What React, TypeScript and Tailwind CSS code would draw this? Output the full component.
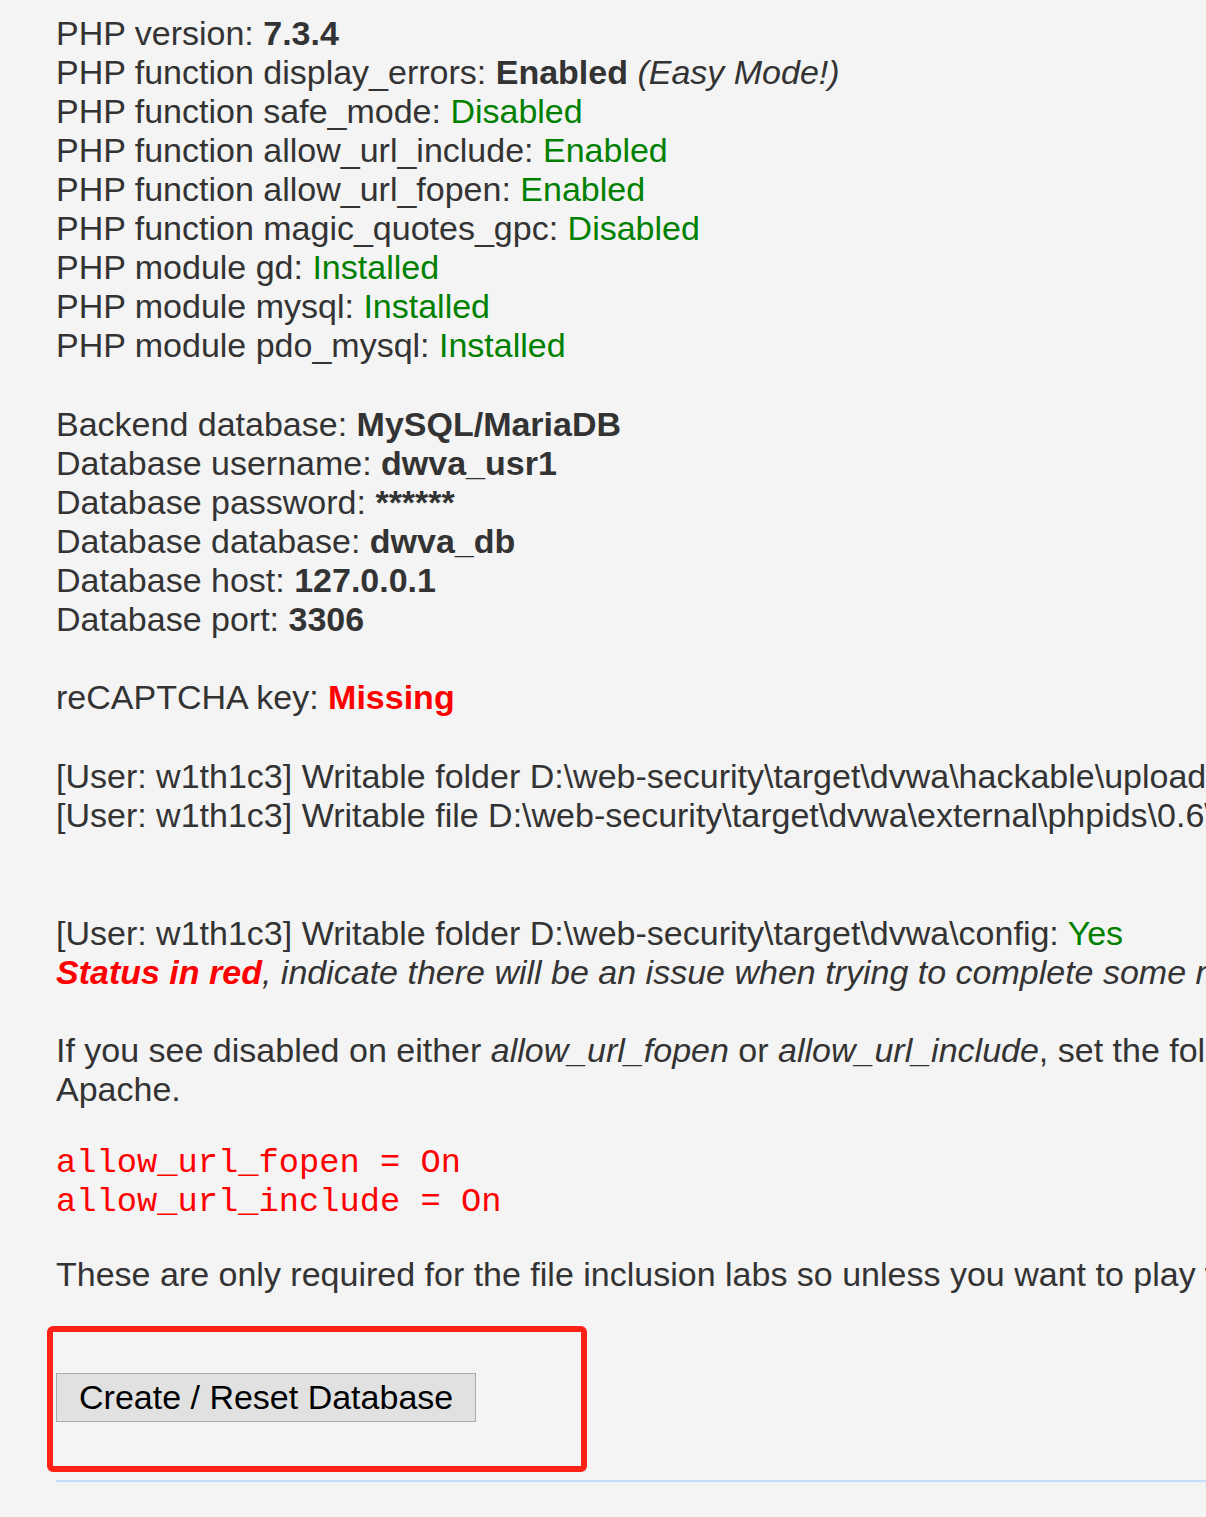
import type { ReactNode } from "react";

type Tone = "green" | "bold" | "red";

function Value({ tone, children }: { tone: Tone; children: ReactNode }) {
  if (tone === "green") return <span className="text-[#008000]">{children}</span>;
  if (tone === "red") return <span className="font-bold text-[#ff0000]">{children}</span>;
  return <span className="font-bold">{children}</span>;
}

function Line({ children, className = "" }: { children: ReactNode; className?: string }) {
  return <div className={`h-[39px] ${className}`}>{children}</div>;
}

const phpChecks: [string, string, Tone][] = [
  ["PHP function safe_mode: ", "Disabled", "green"],
  ["PHP function allow_url_include: ", "Enabled", "green"],
  ["PHP function allow_url_fopen: ", "Enabled", "green"],
  ["PHP function magic_quotes_gpc: ", "Disabled", "green"],
  ["PHP module gd: ", "Installed", "green"],
  ["PHP module mysql: ", "Installed", "green"],
  ["PHP module pdo_mysql: ", "Installed", "green"],
];

const dbInfo: [string, string][] = [
  ["Backend database: ", "MySQL/MariaDB"],
  ["Database username: ", "dwva_usr1"],
  ["Database password: ", "******"],
  ["Database database: ", "dwva_db"],
  ["Database host: ", "127.0.0.1"],
  ["Database port: ", "3306"],
];

export default function App() {
  return (
    <div className="min-h-[1517px] w-[1206px] overflow-hidden bg-[#f4f4f4]">
      <div className="whitespace-nowrap pl-[56px] pt-[14px] font-['Liberation_Sans',Arial,sans-serif] text-[34px] leading-[39px] text-[#333333]">
        <Line>
          PHP version: <Value tone="bold">7.3.4</Value>
        </Line>
        <Line>
          PHP function display_errors: <Value tone="bold">Enabled</Value> <i>(Easy Mode!)</i>
        </Line>
        {phpChecks.map(([label, value, tone]) => (
          <Line key={label}>
            {label}
            <Value tone={tone}>{value}</Value>
          </Line>
        ))}

        <div className="mt-[40px]">
          {dbInfo.map(([label, value]) => (
            <Line key={label}>
              {label}
              <Value tone="bold">{value}</Value>
            </Line>
          ))}
        </div>

        <Line className="mt-[39px]">
          reCAPTCHA key: <Value tone="red">Missing</Value>
        </Line>

        <div className="mt-[40px]">
          <Line>
            [User: w1th1c3] Writable folder D:\web-security\target\dvwa\hackable\uploads\:{" "}
            <Value tone="green">Yes</Value>
          </Line>
          <Line>
            [User: w1th1c3] Writable file
            D:\web-security\target\dvwa\external\phpids\0.6\lib\IDS\tmp\phpids_log.txt:{" "}
            <Value tone="green">Yes</Value>
          </Line>
        </div>

        <div className="mt-[79px]">
          <Line>
            [User: w1th1c3] Writable folder D:\web-security\target\dvwa\config:{" "}
            <Value tone="green">Yes</Value>
          </Line>
          <Line className="italic">
            <span className="font-bold text-[#ff0000]">Status in red</span>, indicate there will be an
            issue when trying to complete some modules.
          </Line>
        </div>

        <div className="mt-[39px]">
          <Line>
            If you see disabled on either <i>allow_url_fopen</i> or <i>allow_url_include</i>, set the
            following in your php.ini file and restart
          </Line>
          <Line>Apache.</Line>
        </div>

        <pre className="mb-[33px] mt-[35px] font-['Liberation_Mono','Courier_New',monospace] text-[33.75px] leading-[39px] text-[#ff0000]">
          {"allow_url_fopen = On\nallow_url_include = On"}
        </pre>

        <Line>
          These are only required for the file inclusion labs so unless you want to play with them,
          you can ignore them.
        </Line>

        <form className="relative mt-[79px]" onSubmit={(e) => e.preventDefault()}>
          <button
            type="submit"
            className="h-[49px] border border-[#a9a9a9] bg-[#e1e1e1] px-[22px] py-[4px] text-[34px] leading-[39px] text-black"
          >
            Create / Reset Database
          </button>
          <div className="pointer-events-none absolute left-[-9px] top-[-47px] h-[146px] w-[540px] rounded-[6px] border-[6px] border-[#ff2116]" />
        </form>

        <div className="mt-[58px] h-[2px] w-[1200px] bg-[#c6dcfb]" />
      </div>
    </div>
  );
}
